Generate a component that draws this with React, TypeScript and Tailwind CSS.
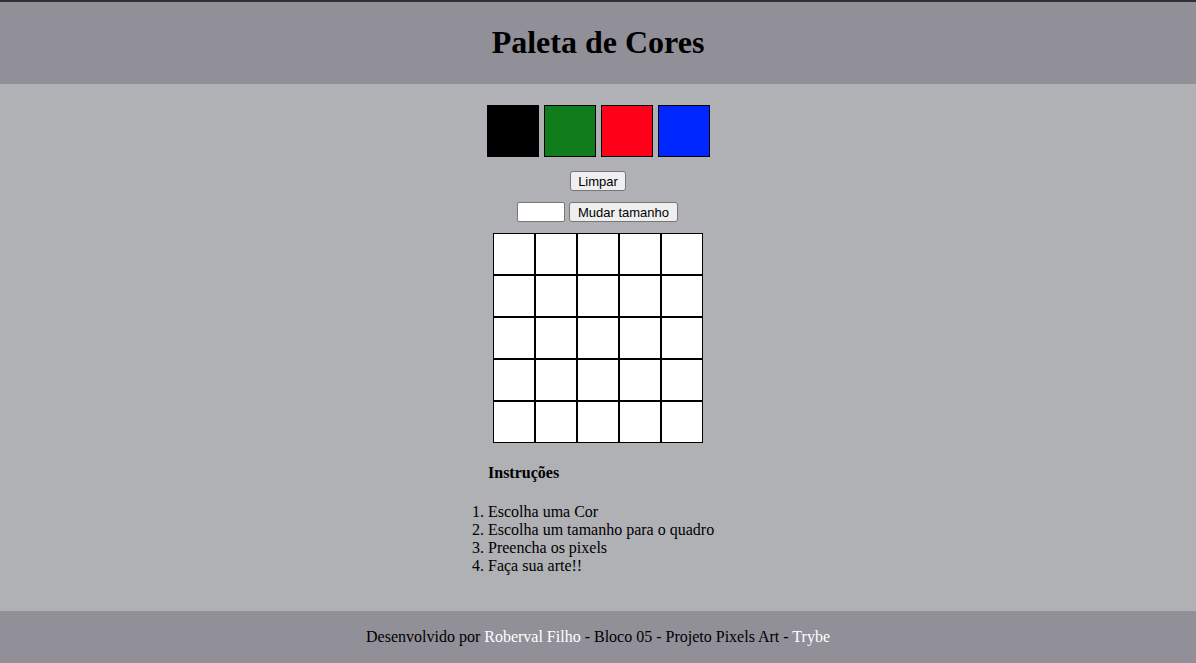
import React from "react";

const colors = ["#000000", "#107c1c", "#ff0019", "#0027ff"];

export default function App() {
  return (
    <div className="min-h-[663px] flex flex-col bg-[#b0b1b5] text-black" style={{ fontFamily: '"Liberation Serif", serif' }}>
      <div className="h-[2px] bg-[#303030]" />
      <header className="h-[82px] bg-[#918f98] flex items-center justify-center pb-[2px]">
        <h1 className="text-[32px] font-bold leading-[37px]">Paleta de Cores</h1>
      </header>
      <main className="flex-1 flex flex-col items-center pt-[21px]">
        <div className="flex gap-[5px]">
          {colors.map((c) => (
            <div key={c} className="w-[52px] h-[52px] border border-black" style={{ backgroundColor: c }} />
          ))}
        </div>
        <button
          className="mt-[14px] h-[20px] px-[7px] text-[13px] leading-none bg-[#efefef] border border-[#767676] rounded-[3px]"
          style={{ fontFamily: '"Liberation Sans", Arial, sans-serif' }}
        >
          Limpar
        </button>
        <div className="mt-[11px] flex items-center gap-[4px] pr-[1px]">
          <input className="w-[48px] h-[20px] bg-white border border-[#767676] rounded-[2px] outline-none" />
          <button
            className="h-[20px] px-[8px] text-[13px] leading-none bg-[#efefef] border border-[#767676] rounded-[3px]"
            style={{ fontFamily: '"Liberation Sans", Arial, sans-serif' }}
          >
            Mudar tamanho
          </button>
        </div>
        <div className="mt-[11px] flex flex-col">
          {[0, 1, 2, 3, 4].map((r) => (
            <div key={r} className="flex">
              {[0, 1, 2, 3, 4].map((c) => (
                <div key={c} className="w-[42px] h-[42px] bg-white border border-black" />
              ))}
            </div>
          ))}
        </div>
        <div className="w-[252px] mt-[21px] text-[16px]">
          <h4 className="font-bold pl-[16px] leading-[18px]">Instruções</h4>
          <ol className="list-decimal pl-[16px] mt-[21px] leading-[18px]">
            <li>Escolha uma Cor</li>
            <li>Escolha um tamanho para o quadro</li>
            <li>Preencha os pixels</li>
            <li>Faça sua arte!!</li>
          </ol>
        </div>
      </main>
      <footer className="h-[52px] bg-[#918f98] flex items-center justify-center text-[16px]">
        <p>
          Desenvolvido por <span className="text-white">Roberval Filho</span> - Bloco 05 - Projeto Pixels Art -{" "}
          <span className="text-white">Trybe</span>
        </p>
      </footer>
    </div>
  );
}
